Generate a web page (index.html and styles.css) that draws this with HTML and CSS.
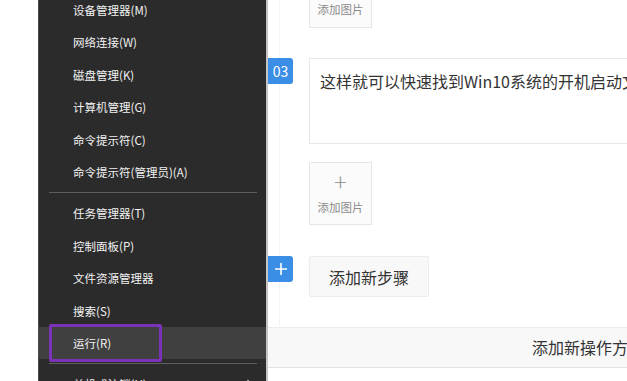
FILE: index.html
```html
<!DOCTYPE html>
<html lang="zh-CN">
<head>
    <meta charset="UTF-8">
    <meta name="viewport" content="width=device-width, initial-scale=1.0">
    <title>添加步骤</title>
    <link rel="stylesheet" href="styles.css">
</head>
<body>
    <div class="page">
        <div class="gutter"></div>

        <div class="menu">
            <ul class="menu-list">
                <li class="menu-item">设备管理器(M)</li>
                <li class="menu-item">网络连接(W)</li>
                <li class="menu-item">磁盘管理(K)</li>
                <li class="menu-item">计算机管理(G)</li>
                <li class="menu-item">命令提示符(C)</li>
                <li class="menu-item">命令提示符(管理员)(A)</li>
                <li class="menu-sep"></li>
                <li class="menu-item">任务管理器(T)</li>
                <li class="menu-item">控制面板(P)</li>
                <li class="menu-item">文件资源管理器</li>
                <li class="menu-item">搜索(S)</li>
                <li class="menu-item active">运行(R)<span class="mark"></span></li>
                <li class="menu-sep"></li>
                <li class="menu-item">关机或注销(U)
                    <svg class="chevron" width="8" height="12" viewBox="0 0 8 12"><path d="M1.5 1 L6.5 6 L1.5 11" fill="none" stroke="#cfcfcf" stroke-width="1.2"/></svg>
                </li>
            </ul>
        </div>

        <div class="content">
            <div class="img-box top">
                <span class="img-label">添加图片</span>
            </div>

            <div class="step">
                <div class="badge">03</div>
                <div class="text-box">这样就可以快速找到Win10系统的开机启动文件夹了</div>
            </div>

            <div class="img-box">
                <span class="img-plus">+</span>
                <span class="img-label">添加图片</span>
            </div>

            <div class="step add">
                <div class="badge">
                    <svg width="14" height="14" viewBox="0 0 14 14"><path d="M7 1 V13 M1 7 H13" stroke="#fff" stroke-width="1.6"/></svg>
                </div>
                <button class="add-step">添加新步骤</button>
            </div>

            <div class="method-bar">添加新操作方法</div>
        </div>
    </div>
</body>
</html>
```

FILE: styles.css
```css
body {
    margin: 0;
    background-color: #fff;
    font-family: "Noto Sans CJK SC", sans-serif;
    overflow: hidden;
}
.page {
    display: flex;
    height: 381px;
    overflow: hidden;
}
.gutter {
    width: 38px;
    flex-shrink: 0;
}

/* start menu (win + x) */
.menu {
    width: 227px;
    flex-shrink: 0;
    background-color: #2b2b2b;
    border-left: 1px solid #4a4a4a;
    border-right: 2px solid #c4c4c4;
}
.menu-list {
    list-style: none;
    margin: -6px 0 0 0;
    padding: 0;
}
.menu-item {
    position: relative;
    height: 32.4px;
    line-height: 32.4px;
    padding-left: 34px;
    color: #f2f2f2;
    font-size: 11.5px;
}
.menu-item.active {
    background-color: #404040;
}
.menu-sep {
    height: 9px;
    position: relative;
}
.menu-sep::after {
    content: "";
    position: absolute;
    left: 10px;
    right: 9px;
    top: 4px;
    border-top: 1px solid #5e5e5e;
}
.mark {
    position: absolute;
    left: 10px;
    top: -3px;
    width: 107px;
    height: 32px;
    border: 3px solid #7a33b8;
    border-radius: 2px;
}
.chevron {
    position: absolute;
    right: 12px;
    top: 11px;
}

/* right side editor */
.content {
    flex: 1;
    min-width: 0;
    display: flex;
    flex-direction: column;
    overflow: hidden;
    background: linear-gradient(#f4f4f4, #f4f4f4) 11px 0 / 1px 326px no-repeat;
}
.img-box {
    width: 63px;
    height: 63px;
    margin-left: 41px;
    margin-top: 18px;
    box-sizing: border-box;
    border: 1px solid #e6e6e6;
    background-color: #fbfbfb;
    display: flex;
    flex-direction: column;
    align-items: center;
    justify-content: flex-end;
    padding-bottom: 9px;
}
.img-box.top {
    margin-top: -35px;
    padding-bottom: 10px;
}
.img-plus {
    font-size: 24px;
    line-height: 24px;
    color: #9a9a9a;
    font-weight: 300;
    margin-bottom: 6px;
}
.img-label {
    font-size: 11.5px;
    line-height: 16px;
    color: #8a8a8a;
}
.step {
    display: flex;
    align-items: flex-start;
    margin-top: 30px;
}
.badge {
    width: 25px;
    height: 26px;
    flex-shrink: 0;
    background-color: #3a8ee6;
    border-radius: 0 3px 3px 0;
    color: #fff;
    font-size: 14px;
    line-height: 26px;
    display: flex;
    align-items: center;
    justify-content: center;
}
.text-box {
    margin-left: 16px;
    width: 420px;
    flex-shrink: 0;
    height: 86px;
    box-sizing: border-box;
    border: 1px solid #e8e8e8;
    padding: 10px 10px;
    font-size: 16px;
    line-height: 24px;
    color: #333;
    white-space: nowrap;
}
.step.add {
    margin-top: 31px;
}
.add-step {
    margin-left: 16px;
    width: 120px;
    height: 41px;
    border: 1px solid #ececec;
    border-radius: 2px;
    background-color: #f8f8f8;
    font-family: inherit;
    font-size: 16px;
    color: #333;
    padding: 0;
}
.method-bar {
    margin-top: 30px;
    height: 41px;
    box-sizing: border-box;
    border-top: 1px solid #ececec;
    border-bottom: 1px solid #e2e2e2;
    background-color: #f8f8f8;
    padding-left: 264px;
    font-size: 16px;
    line-height: 39px;
    color: #333;
    white-space: nowrap;
}
```
